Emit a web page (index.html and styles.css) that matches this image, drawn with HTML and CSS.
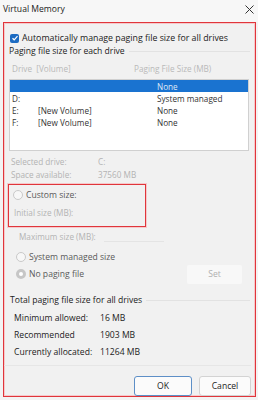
FILE: index.html
```html
<!DOCTYPE html>
<html lang="en">
<head>
    <meta charset="UTF-8">
    <meta name="viewport" content="width=device-width, initial-scale=1.0">
    <title>Virtual Memory</title>
    <link rel="stylesheet" href="styles.css">
</head>
<body>
    <div class="titlebar">
        <span class="title">Virtual Memory</span>
        <svg class="close" width="9" height="9" viewBox="0 0 9 9"><path d="M0.5 0.5 L8.5 8.5 M8.5 0.5 L0.5 8.5" stroke="#333" stroke-width="1" fill="none"/></svg>
    </div>
    <div class="dialog">
        <div class="row auto-row">
            <span class="checkbox"><svg width="8" height="8" viewBox="0 0 8 8"><path d="M1.5 4.2 L3.2 5.8 L6.5 2.2" stroke="#fff" stroke-width="1.2" fill="none"/></svg></span>
            <span>Automatically manage paging file size for all drives</span>
        </div>
        <div class="group-head"><span>Paging file size for each drive</span><i class="rule"></i></div>
        <div class="cols">
            <span class="col-drive">Drive  [Volume]</span>
            <span class="col-size">Paging File Size (MB)</span>
        </div>
        <div class="listbox">
            <div class="item selected"><span class="d"></span><span class="v"></span><span class="s">None</span></div>
            <div class="item"><span class="d">D:</span><span class="v"></span><span class="s">System managed</span></div>
            <div class="item"><span class="d">E:</span><span class="v">[New Volume]</span><span class="s">None</span></div>
            <div class="item"><span class="d">F:</span><span class="v">[New Volume]</span><span class="s">None</span></div>
        </div>
        <div class="info muted">
            <div class="pair"><span class="k">Selected drive:</span><span>C:</span></div>
            <div class="pair"><span class="k">Space available:</span><span>37560 MB</span></div>
        </div>
        <div class="custom-box">
            <div class="row radio-row muted-dark"><span class="radio"></span><span>Custom size:</span></div>
            <div class="field muted">Initial size (MB):</div>
        </div>
        <div class="field max-field muted">Maximum size (MB):<i class="under"></i></div>
        <div class="row radio-row sys-row muted-dark"><span class="radio"></span><span>System managed size</span></div>
        <div class="row nopage-row">
            <span class="radio checked"></span><span class="muted-dark">No paging file</span>
            <span class="set-btn">Set</span>
        </div>
        <div class="group-head total-head"><span>Total paging file size for all drives</span><i class="rule"></i></div>
        <div class="totals">
            <div class="pair"><span class="k">Minimum allowed:</span><span>16 MB</span></div>
            <div class="pair"><span class="k">Recommended</span><span>1903 MB</span></div>
            <div class="pair"><span class="k">Currently allocated:</span><span>11264 MB</span></div>
        </div>
        <div class="buttons">
            <span class="btn ok">OK</span>
            <span class="btn">Cancel</span>
        </div>
    </div>
</body>
</html>
```

FILE: styles.css
```css
body { margin: 0; width: 258px; height: 400px; overflow: hidden; background: #f3f3f3; font-family: "Open Sans", "Noto Sans", sans-serif; font-size: 8.6px; color: #1b1b1b; }
.titlebar { height: 22px; display: flex; align-items: center; justify-content: space-between; padding: 0 4px 0 3px; background: #f7f7f7; }
.title { font-size: 8.6px; margin-top: -4px; }
.close { margin-top: -4px; }
.dialog { box-sizing: border-box; margin: 0 2px 0 3px; height: 375px; border: 1px solid #e0353b; box-shadow: inset 0 0 0 1px #f6c9cb; background: #f1f1f1; padding: 0 5px 0 5px; position: relative; }
.row { display: flex; align-items: center; }
.auto-row { height: 14px; margin-top: 8px; gap: 3px; font-size: 8.8px; }
.checkbox { width: 9px; height: 9px; border-radius: 2px; background: #1c6bc2; display: flex; align-items: center; justify-content: center; margin-left: 1px; }
.checkbox svg { display: block; }
.group-head { display: flex; align-items: center; gap: 4px; height: 12px; }
.rule { flex: 1; height: 1px; background: #e2e2e2; }
.cols { display: flex; height: 12px; margin-top: 6px; color: #b9b9b9; font-size: 8.2px; padding-left: 3px; }
.col-drive { width: 122px; white-space: pre; }
.listbox { margin-top: 4px; height: 72px; background: #fff; border: 1px solid #d0d0d0; box-sizing: border-box; margin-right: 1px; }
.item { display: flex; height: 12px; align-items: center; font-size: 8.2px; color: #333; padding-left: 2px; }
.item .d { width: 26px; }
.item .v { width: 119px; }
.item.selected { background: #1a73d0; color: #dfe9f6; }
.muted { color: #b3b3b3; }
.muted-dark { color: #5a5a5a; }
.info { margin-top: 4px; padding-left: 2px; font-size: 8.2px; }
.pair { display: flex; height: 13px; align-items: center; }
.pair .k { width: 87px; }
.custom-box { margin: 3px 0 0 -1px; width: 138px; height: 43px; box-sizing: border-box; border: 1px solid #e0353b; box-shadow: 0 0 0 1px #f6c9cb; padding-left: 4px; }
.radio { width: 8px; height: 8px; border: 1px solid #c9c9c9; border-radius: 50%; background: #f7f7f7; flex: none; }
.radio.checked { border: 3px solid #c6c6c6; width: 4px; height: 4px; background: #fff; }
.radio-row { gap: 3px; height: 14px; }
.custom-box .radio-row { margin-top: 3px; }
.field { height: 14px; display: flex; align-items: center; font-size: 8.2px; padding-left: 1px; }
.custom-box .field { margin-top: 3px; }
.max-field { margin-top: 2px; padding-left: 10px; position: relative; }
.under { position: absolute; left: 95px; width: 60px; bottom: 1px; height: 1px; background: #e4e4e4; }
.sys-row { margin-top: 7px; padding-left: 7px; }
.nopage-row { height: 20px; padding-left: 7px; gap: 3px; }
.set-btn { margin-left: auto; width: 55px; height: 19px; display: flex; align-items: center; justify-content: center; background: #f8f8f8; color: #b0b0b0; border-radius: 2px; margin-right: 8px; flex: none; }
.total-head { margin-top: 10px; padding-left: 1px; }
.totals { margin-top: 3px; padding-left: 5px; }
.totals .pair { height: 17px; }
.totals .pair .k { width: 86px; }
.buttons { display: flex; justify-content: flex-end; gap: 7px; position: absolute; right: 4px; bottom: 0; left: 0; border-top: 1px solid #e6e6e6; padding-top: 10px; }
.btn { flex: none; width: 52px; height: 20px; display: flex; align-items: center; justify-content: center; background: #fbfbfb; border: 1px solid #d3d3d3; border-radius: 3px; box-sizing: border-box; }
.btn.ok { width: 58px; border-color: #5d8fc7; }
```
